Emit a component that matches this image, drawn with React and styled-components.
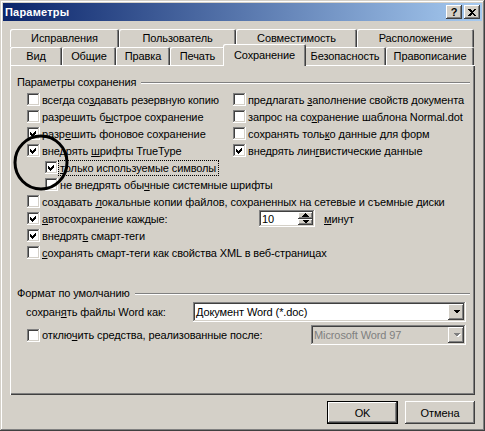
import React from 'react';
import styled, { createGlobalStyle } from 'styled-components';

const GlobalStyle = createGlobalStyle`
  html, body {
    margin: 0;
    padding: 0;
    background: #d4d0c8;
  }
  body {
    font-family: "Liberation Sans", Arial, sans-serif;
    font-size: 11px;
    letter-spacing: -0.1px;
    color: #000;
  }
  * {
    box-sizing: border-box;
  }
`;

const raised = `
  box-shadow: inset -1px -1px #404040, inset 1px 1px #fff,
    inset -2px -2px #808080, inset 2px 2px #d4d0c8;
`;

const sunken = `
  box-shadow: inset -1px -1px #fff, inset 1px 1px #808080,
    inset -2px -2px #d4d0c8, inset 2px 2px #404040;
`;

const Window = styled.div`
  position: relative;
  width: 485px;
  height: 431px;
  padding: 3px;
  display: flex;
  flex-direction: column;
  background: #d4d0c8;
  box-shadow: inset -1px -1px #404040, inset 1px 1px #d4d0c8,
    inset -2px -2px #808080, inset 2px 2px #fff;
`;

const TitleBar = styled.div`
  height: 18px;
  display: flex;
  align-items: center;
  padding: 0 2px 0 2px;
  background: linear-gradient(to right, #0a246a, #a6caf0);
`;

const Title = styled.div`
  flex: 1;
  color: #fff;
  font-weight: bold;
  font-size: 11px;
  letter-spacing: 0.2px;
`;

const TitleButton = styled.div`
  width: 16px;
  height: 14px;
  margin-left: ${(p) => p.$gap || 0}px;
  display: flex;
  align-items: center;
  justify-content: center;
  background: #d4d0c8;
  font-weight: bold;
  font-size: 11px;
  line-height: 14px;
  ${raised}
`;

const Body = styled.div`
  flex: 1;
  display: flex;
  flex-direction: column;
  padding: 8px 7px 0 7px;
`;

const TabRow = styled.div`
  display: flex;
  align-items: flex-start;
  height: 18px;
`;

const Tab = styled.div`
  position: relative;
  width: ${(p) => (p.$active ? p.$w + 4 : p.$w)}px;
  height: ${(p) => (p.$active ? 22 : 18)}px;
  margin: ${(p) => (p.$active ? '-3px -2px -1px' : '0')};
  z-index: ${(p) => (p.$active ? 2 : 0)};
  display: flex;
  align-items: center;
  justify-content: center;
  white-space: nowrap;
  background: #d4d0c8;
  border-radius: 2px 2px 0 0;
  box-shadow: inset 1px 1px #fff, inset -1px 0 #404040, inset -2px 0 #808080;
`;

const Panel = styled.div`
  height: 330px;
  padding: 11px 5px 0 7px;
  background: #d4d0c8;
  box-shadow: inset 1px 1px #fff, inset -1px -1px #404040,
    inset -2px -2px #808080;
`;

const Group = styled.div`
  margin-top: ${(p) => p.$top || 0}px;
`;

const GroupHead = styled.div`
  display: flex;
  align-items: center;
  height: 13px;
  line-height: 13px;
`;

const GroupLine = styled.div`
  flex: 1;
  height: 2px;
  margin-left: 5px;
  border-top: 1px solid #808080;
  border-bottom: 1px solid #fff;
`;

const Rows = styled.div`
  margin-top: 2px;
  padding-left: 10px;
`;

const TwoCols = styled.div`
  display: grid;
  grid-template-columns: 206px 1fr;
  grid-auto-rows: 17px;
`;

const CheckRow = styled.div`
  display: flex;
  align-items: center;
  height: 17px;
  padding-left: ${(p) => p.$indent || 0}px;
  white-space: nowrap;
`;

const CheckItem = styled.div`
  display: flex;
  align-items: center;
  flex: ${(p) => (p.$w ? `0 0 ${p.$w}px` : '0 0 auto')};
`;

const Box = styled.div`
  width: 13px;
  height: 13px;
  flex: none;
  background: #fff;
  ${sunken}
`;

const Label = styled.span`
  margin-left: ${(p) => (p.$focus ? 0 : 2)}px;
  padding: ${(p) => (p.$focus ? '0 2px 0 1px' : '0')};
  border: ${(p) => (p.$focus ? '1px dotted #000' : 'none')};
  line-height: 14px;
`;

const U = styled.span`
  text-decoration: underline;
`;

const Spin = styled.div`
  width: 56px;
  height: 17px;
  padding: 2px;
  display: flex;
  align-items: center;
  background: #fff;
  ${sunken}
`;

const SpinText = styled.span`
  flex: 1;
  padding-left: 1px;
`;

const SpinButtons = styled.div`
  width: 15px;
  height: 13px;
  display: flex;
  flex-direction: column;
`;

const SpinButton = styled.div`
  flex: 1;
  display: flex;
  align-items: center;
  justify-content: center;
  background: #d4d0c8;
  ${raised}
`;

const Unit = styled.span`
  margin-left: 9px;
`;

const FieldRow = styled.div`
  display: flex;
  align-items: center;
  height: 20px;
  margin-top: ${(p) => p.$top || 0}px;
  padding-left: ${(p) => p.$pad || 0}px;
  white-space: nowrap;
`;

const FieldLabel = styled.span`
  flex: 0 0 ${(p) => p.$w}px;
`;

const Combo = styled.div`
  width: ${(p) => p.$w}px;
  height: 20px;
  padding: 2px;
  display: flex;
  align-items: center;
  background: ${(p) => (p.$disabled ? '#d4d0c8' : '#fff')};
  color: ${(p) => (p.$disabled ? '#808080' : '#000')};
  ${sunken}
`;

const ComboText = styled.span`
  flex: 1;
  padding-left: 1px;
  overflow: hidden;
`;

const ComboButton = styled.div`
  width: 16px;
  height: 16px;
  display: flex;
  align-items: center;
  justify-content: center;
  background: #d4d0c8;
  ${raised}
`;

const ButtonRow = styled.div`
  display: flex;
  justify-content: flex-end;
  gap: 7px;
  margin-top: 6px;
`;

const Button = styled.div`
  width: ${(p) => p.$w}px;
  height: 23px;
  display: flex;
  align-items: center;
  justify-content: center;
  background: #d4d0c8;
  border: ${(p) => (p.$default ? '1px solid #000' : 'none')};
  ${raised}
`;

const Mark = styled.svg`
  position: absolute;
  left: 13px;
  top: 134px;
  pointer-events: none;
`;

const Tick = () => (
  <svg width="13" height="13" viewBox="0 0 13 13" shapeRendering="crispEdges">
    <path d="M3 5 L5 7 L9 3 L9 6 L5 10 L3 8 Z" fill="#000" />
  </svg>
);

const Check = ({ checked, children, indent, focus, width }) => (
  <CheckItem $w={width} style={indent ? { paddingLeft: indent } : undefined}>
    <Box>{checked && <Tick />}</Box>
    <Label $focus={focus}>{children}</Label>
  </CheckItem>
);

const Arrow = ({ up, color = '#000', shadow }) => (
  <svg width="7" height="4" viewBox="0 0 7 4" shapeRendering="crispEdges" style={{ overflow: 'visible' }}>
    {shadow && (
      <path d={up ? 'M4.5 1 L8 4.5 L1 4.5 Z' : 'M1 1 L8 1 L4.5 4.5 Z'} fill="#fff" />
    )}
    <path d={up ? 'M3.5 0 L7 3.5 L0 3.5 Z' : 'M0 0 L7 0 L3.5 3.5 Z'} fill={color} />
  </svg>
);

const backTabs = [
  ['Исправления', 109],
  ['Пользователь', 117],
  ['Совместимость', 121],
  ['Расположение', 117],
];

const frontTabs = [
  ['Вид', 52],
  ['Общие', 54],
  ['Правка', 54],
  ['Печать', 55],
  ['Сохранение', 79],
  ['Безопасность', 82],
  ['Правописание', 88],
];

export default function App() {
  return (
    <>
      <GlobalStyle />
      <Window>
        <TitleBar>
          <Title>Параметры</Title>
          <TitleButton>?</TitleButton>
          <TitleButton $gap={2}>
            <svg width="8" height="7" viewBox="0 0 8 7" shapeRendering="crispEdges">
              <path d="M0 0 H2 L4 2 L6 0 H8 L5 3.5 L8 7 H6 L4 5 L2 7 H0 L3 3.5 Z" fill="#000" />
            </svg>
          </TitleButton>
        </TitleBar>

        <Body>
          <TabRow>
            {backTabs.map(([name, w]) => (
              <Tab key={name} $w={w}>{name}</Tab>
            ))}
          </TabRow>
          <TabRow>
            {frontTabs.map(([name, w]) => (
              <Tab key={name} $w={w} $active={name === 'Сохранение'}>{name}</Tab>
            ))}
          </TabRow>

          <Panel>
            <Group>
              <GroupHead>
                Параметры сохранения
                <GroupLine />
              </GroupHead>
              <Rows>
                <TwoCols>
                  <Check>всегда со<U>з</U>давать резервную копию</Check>
                  <Check>предлагать <U>з</U>аполнение свойств документа</Check>
                  <Check>разрешить б<U>ы</U>строе сохранение</Check>
                  <Check>запрос на со<U>х</U>ранение шаблона Normal.dot</Check>
                  <Check checked>разр<U>е</U>шить фоновое сохранение</Check>
                  <Check>сохранять толь<U>к</U>о данные для форм</Check>
                  <Check checked>внедрять <U>ш</U>рифты TrueType</Check>
                  <Check checked>внедрять лин<U>г</U>вистические данные</Check>
                </TwoCols>
                <CheckRow $indent={18}>
                  <Check checked focus><U>т</U>олько используемые символы</Check>
                </CheckRow>
                <CheckRow $indent={18}>
                  <Check>не внедрять обы<U>ч</U>ные системные шрифты</Check>
                </CheckRow>
                <CheckRow>
                  <Check>создавать <U>л</U>окальные копии файлов, сохраненных на сетевые и съемные диски</Check>
                </CheckRow>
                <CheckRow>
                  <Check checked width={232}><U>а</U>втосохранение каждые:</Check>
                  <Spin>
                    <SpinText>10</SpinText>
                    <SpinButtons>
                      <SpinButton><Arrow up /></SpinButton>
                      <SpinButton><Arrow /></SpinButton>
                    </SpinButtons>
                  </Spin>
                  <Unit><U>м</U>инут</Unit>
                </CheckRow>
                <CheckRow>
                  <Check checked>внедрят<U>ь</U> смарт-теги</Check>
                </CheckRow>
                <CheckRow>
                  <Check><U>с</U>охранять смарт-теги как свойства XML в веб-страницах</Check>
                </CheckRow>
              </Rows>
            </Group>

            <Group $top={26}>
              <GroupHead>
                Формат по умолчанию
                <GroupLine />
              </GroupHead>
              <FieldRow $top={2} $pad={9}>
                <FieldLabel $w={167}>сохран<U>я</U>ть файлы Word как:</FieldLabel>
                <Combo $w={273}>
                  <ComboText>Документ Word (*.doc)</ComboText>
                  <ComboButton><Arrow /></ComboButton>
                </Combo>
              </FieldRow>
              <FieldRow $top={3} $pad={10}>
                <Check width={284}>отклю<U>ч</U>ить средства, реализованные после:</Check>
                <Combo $w={155} $disabled>
                  <ComboText>Microsoft Word 97</ComboText>
                  <ComboButton><Arrow color="#808080" shadow /></ComboButton>
                </Combo>
              </FieldRow>
            </Group>
          </Panel>

          <ButtonRow>
            <Button $w={71} $default>OK</Button>
            <Button $w={70}>Отмена</Button>
          </ButtonRow>
        </Body>

        <Mark width="60" height="60" viewBox="0 0 60 60">
          <ellipse cx="28" cy="28.5" rx="26" ry="26.5" fill="none" stroke="#000" strokeWidth="3" />
        </Mark>
      </Window>
    </>
  );
}
